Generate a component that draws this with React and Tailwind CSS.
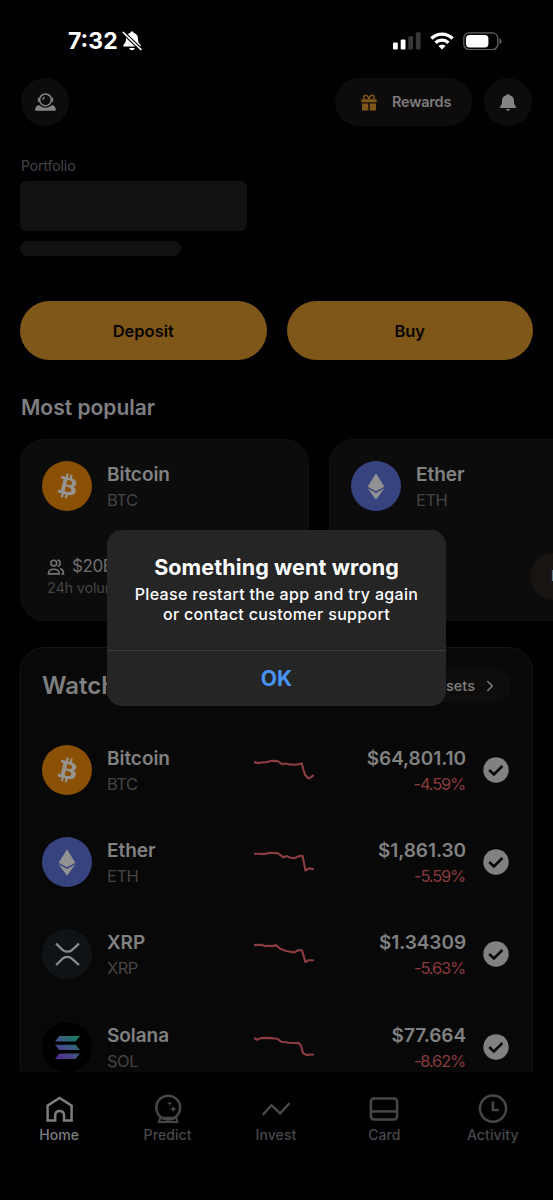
import { ChevronRight } from "lucide-react";

const BtcLogo = () => (
  <svg viewBox="0 0 50 50" className="h-[50px] w-[50px] shrink-0">
    <circle cx="25" cy="25" r="25" fill="#8a5003" />
    <path
      transform="translate(5 4.8) scale(1.26)"
      fill="#969390"
      d="M23.189 14.02c.314-2.096-1.283-3.223-3.465-3.975l.708-2.84-1.728-.43-.69 2.765c-.454-.114-.92-.22-1.385-.326l.695-2.783L15.596 6l-.708 2.839c-.376-.086-.746-.17-1.104-.26l.002-.009-2.384-.595-.46 1.846s1.283.294 1.256.312c.7.175.826.638.805 1.006l-.806 3.235c.048.012.11.03.18.057l-.183-.045-1.13 4.532c-.086.212-.303.531-.793.41.018.025-1.256-.313-1.256-.313l-.858 1.978 2.25.561c.418.105.828.215 1.231.318l-.715 2.872 1.727.43.708-2.84c.472.127.93.245 1.378.357l-.706 2.828 1.728.43.715-2.866c2.948.558 5.164.333 6.097-2.333.752-2.146-.037-3.385-1.588-4.192 1.13-.26 1.98-1.003 2.207-2.538zm-3.95 5.538c-.533 2.147-4.148.986-5.32.695l.95-3.805c1.172.293 4.929.872 4.37 3.11zm.535-5.569c-.487 1.953-3.495.96-4.47.717l.86-3.45c.975.243 4.118.696 3.61 2.733z"
    />
  </svg>
);

const EthLogo = () => (
  <svg viewBox="0 0 50 50" className="h-[50px] w-[50px] shrink-0">
    <circle cx="25" cy="25" r="25" fill="#36437f" />
    <path d="M25 12.2 33.4 25.8 25 30.2 16.6 25.8Z" fill="#929292" />
    <path d="M16.6 27.3 25 31.9 33.4 27.3 25 38.8Z" fill="#929292" />
  </svg>
);

const XrpLogo = () => (
  <svg viewBox="0 0 50 50" className="h-[50px] w-[50px] shrink-0">
    <circle cx="25" cy="25" r="25" fill="#101315" />
    <g fill="none" stroke="#8a8b8c" strokeWidth="2.3">
      <path d="M14.2 14.6 20.4 20.8C23 23.3 27.6 23.3 30.2 20.8L37 14.6" />
      <path d="M14.2 36 20.4 29.8C23 27.3 27.6 27.3 30.2 29.8L37 36" />
    </g>
  </svg>
);

const SolLogo = () => (
  <svg viewBox="0 0 50 50" className="h-[50px] w-[50px] shrink-0">
    <defs>
      <linearGradient id="sol" x1="15" y1="38" x2="36" y2="13" gradientUnits="userSpaceOnUse">
        <stop offset="0" stopColor="#552590" />
        <stop offset="0.5" stopColor="#3f5584" />
        <stop offset="1" stopColor="#108456" />
      </linearGradient>
    </defs>
    <circle cx="25" cy="25" r="25" fill="#000000" />
    <g fill="url(#sol)">
      <path d="M17.2 14H38L33.6 19.4H13Z" />
      <path d="M13 22.7H33.6L38 28.1H17.2Z" />
      <path d="M17.2 31.4H38L33.6 36.9H13Z" />
    </g>
  </svg>
);

const assets = [
  {
    name: "Bitcoin",
    symbol: "BTC",
    price: "$64,801.10",
    change: "-4.59%",
    Logo: BtcLogo,
    points: "1,-24 13,-21 22,-23 38,-24 55,-28 72,-27 86,-18 96,-20 108,-17 122,-16 138,-18 146,-20 151,0 156,15 166,26 172,23 180,17",
  },
  {
    name: "Ether",
    symbol: "ETH",
    price: "$1,861.30",
    change: "-5.59%",
    Logo: EthLogo,
    points: "1,-25 15,-25 30,-24 50,-28 72,-27 82,-20 90,-14 98,-18 112,-13 124,-12 138,-18 148,-19 157,26 168,19 180,22",
  },
  {
    name: "XRP",
    symbol: "XRP",
    price: "$1.34309",
    change: "-5.63%",
    Logo: XrpLogo,
    points: "1,-27 23,-28 33,-24 44,-25 56,-24 67,-27 80,-16 98,-9 123,-5 132,-10 140,-12 147,-10 157,25 166,19 180,19",
  },
  {
    name: "Solana",
    symbol: "SOL",
    price: "$77.664",
    change: "-8.62%",
    Logo: SolLogo,
    points: "1,-27 10,-22 20,-27 38,-28 52,-27 72,-25 83,-16 108,-13 136,-12 142,-6 150,19 160,24 180,23",
  },
];

const StatusBar = () => (
  <div className="flex h-[78px] items-center justify-between pl-[68px] pr-[51px] pt-1">
    <div className="flex items-center gap-1 text-white">
      <span className="text-[23px] font-bold leading-7">7:32</span>
      <svg viewBox="0 0 20 20" className="h-5 w-5" fill="#fff">
        <path d="M10 .6C10.9.6 11.6 1.1 11.8 1.9 14.6 2.6 16 4.8 16 7.6 16 11.3 17 12.3 18.4 13.8 19 14.6 18.7 15.6 17.8 15.6H2.2C1.3 15.6 1 14.6 1.6 13.8 3 12.3 4 11.3 4 7.6 4 4.8 5.4 2.6 8.2 1.9 8.4 1.1 9.1.6 10 .6Z" />
        <path d="M7.2 17H12.8C12.4 18.5 11.3 19.2 10 19.2S7.6 18.5 7.2 17Z" />
        <path d="M1.2 1.4 19 18.6" stroke="#010103" strokeWidth="3.8" />
        <path d="M1.2 1.4 19 18.6" stroke="#fff" strokeWidth="1.5" strokeLinecap="round" />
      </svg>
    </div>

    <div className="flex items-center gap-[9px]">
      <svg viewBox="0 0 28 18" className="h-[18px] w-7">
        <rect x="0" y="10.5" width="4.8" height="7" rx="1.3" fill="#fff" />
        <rect x="7.7" y="7.5" width="4.8" height="10" rx="1.3" fill="#fff" />
        <rect x="15.3" y="4.2" width="4.8" height="13.3" rx="1.3" fill="#38383a" />
        <rect x="22.8" y="0.3" width="4.8" height="17.2" rx="1.3" fill="#38383a" />
      </svg>
      <svg viewBox="0 0 24 18" className="h-[18px] w-6" fill="none" stroke="#fff" strokeWidth="3.3">
        <path d="M1.4 6.5C7.4.7 16.6.7 22.6 6.5" />
        <path d="M5.5 10.8C9.2 7.3 14.8 7.3 18.5 10.8" />
        <path d="M12 17.6 8.4 14.1C10.4 12.2 13.6 12.2 15.6 14.1Z" fill="#fff" stroke="none" />
      </svg>
      <svg viewBox="0 0 39 18" className="h-[18px] w-[39px]">
        <rect x="0.8" y="0.8" width="34" height="16.8" rx="5.4" fill="none" stroke="#626264" strokeWidth="1.3" />
        <rect x="3" y="3" width="22.4" height="12.4" rx="3.6" fill="#fff" />
        <path d="M36.4 6.2C39.2 7 39.2 11.4 36.4 12.2Z" fill="#626264" />
      </svg>
    </div>
  </div>
);

const Header = () => (
  <div className="flex h-12 items-center justify-between pl-[21px] pr-[21px]">
    <button type="button" className="flex h-12 w-12 items-center justify-center rounded-full bg-[#0d0b0b]">
      <svg viewBox="0 0 21 18" className="h-[18px] w-[21px]">
        <path
          d="M.2 17.8C.2 14.2 1.2 12.4 4.3 12.3 6 14 8 14.7 10.5 14.7S15 14 16.7 12.3C19.8 12.4 20.8 14.2 20.8 17.8Z"
          fill="#858385"
        />
        <circle cx="10.5" cy="6.8" r="5.9" fill="none" stroke="#858385" strokeWidth="1.5" />
        <path d="M3.6 4.8V8.8M17.4 4.8V8.8" stroke="#858385" strokeWidth="1.5" />
        <path d="M7.8 6.9C7.8 5.5 8.6 4.6 9.9 4.4" fill="none" stroke="#858385" strokeWidth="1.2" />
      </svg>
    </button>

    <div className="flex gap-3">
      <button type="button" className="flex h-12 w-[137px] items-center rounded-full bg-[#0d0b0b] pl-[26px]">
        <svg viewBox="0 0 16 17" className="h-[17px] w-4" fill="#7f5719">
          <path d="M.3 5.3H15.7V8.2H.3ZM1 9.5H7.3V16.4H1ZM8.7 9.5H15V16.4H8.7Z" />
          <path
            d="M8 5.2C7.3 2.9 6.3 1.3 4.6 1.3 2.4 1.3 2.2 4.2 4 5.2M8 5.2C8.7 2.9 9.7 1.3 11.4 1.3 13.6 1.3 13.8 4.2 12 5.2"
            fill="none"
            stroke="#7f5719"
            strokeWidth="1.6"
          />
        </svg>
        <span className="ml-[15px] text-[14.5px] font-semibold tracking-[-0.2px] text-[#7e7c7d]">Rewards</span>
      </button>
      <button type="button" className="flex h-12 w-12 items-center justify-center rounded-full bg-[#0d0b0b]">
        <svg viewBox="0 0 16 17" className="h-[17px] w-4" fill="#858385">
          <path d="M8 .2C9 .2 9.6.7 9.8 1.2 12.6 1.9 14 4 14 6.6V9.7L15.8 12.3V14H.2V12.3L2 9.7V6.6C2 4 3.4 1.9 6.2 1.2 6.4.7 7 .2 8 .2Z" />
          <path d="M5.8 15H10.2C9.7 16.3 9 16.7 8 16.7S6.3 16.3 5.8 15Z" />
        </svg>
      </button>
    </div>
  </div>
);

const AssetName = ({ name, symbol }) => (
  <div className="ml-[15px]">
    <p className="h-[27px] text-[19px] font-semibold leading-[27px] tracking-[-0.05px] text-[#818181]">{name}</p>
    <p className="h-[26px] text-[16.5px] leading-[25px] tracking-[-0.5px] text-[#454444]">{symbol}</p>
  </div>
);

const PopularCard = ({ asset, volume, action }) => {
  const { Logo } = asset;

  return (
    <div className="h-[182px] w-[289px] shrink-0 rounded-[24px] border border-[#101010] bg-[#0c0c0c] p-[21px]">
      <div className="flex h-[53px] items-start">
        <Logo />
        <AssetName name={asset.name} symbol={asset.symbol} />
      </div>

      <div className="mt-[39px] flex">
        {volume && (
          <div className="pl-[5px] pt-[3px]">
            <p className="flex h-[22px] items-center text-[17px] tracking-[-0.4px] text-[#6f6e6e]">
              <svg viewBox="0 0 18 16" className="mr-[7px] h-4 w-[18px]" fill="none" stroke="#747373" strokeWidth="1.6">
                <circle cx="6.8" cy="4.1" r="2.9" />
                <path d="M1.4 14.9C1.4 11.6 3 10.2 6.8 10.2S12.2 11.6 12.2 14.9Z" />
                <path d="M10.6 1.1C14 1.1 14 7.1 10.6 7.1M13.2 9.6C15.8 10.2 16.5 12 16.5 14.9H14.4" />
              </svg>
              {volume}
            </p>
            <p className="h-[21px] text-[14.5px] leading-[20px] tracking-[-0.2px] text-[#454444]">24h volume</p>
          </div>
        )}
        {action && (
          <button
            type="button"
            className="ml-auto h-[47px] w-[66px] rounded-full bg-[#171412] pl-1 text-[15px] font-semibold text-[#818181]"
          >
            {action}
          </button>
        )}
      </div>
    </div>
  );
};

const WatchRow = ({ asset }) => {
  const { Logo } = asset;

  return (
    <div className="flex h-[92.4px] items-center">
      <Logo />
      <div className="h-[50px] w-[162px]">
        <AssetName name={asset.name} symbol={asset.symbol} />
      </div>
      <svg viewBox="0 -75 183 150" className="mr-px h-[50px] w-[60px] shrink-0">
        <polyline points={asset.points} fill="none" stroke="#8b3d40" strokeWidth="6.5" strokeLinejoin="round" strokeLinecap="round" />
      </svg>
      <div className="h-[50px] flex-1 text-right">
        <p className="h-[27px] text-[19px] font-semibold leading-[27px] tracking-[-0.05px] text-[#818181]">{asset.price}</p>
        <p className="h-[26px] text-[16.5px] leading-[25px] tracking-[-1.2px] text-[#883a3d]">
          <span className="mr-px">{asset.change}</span>
        </p>
      </div>
      <svg viewBox="0 0 26 26" className="ml-[17px] mr-[2px] h-[26px] w-[26px] shrink-0">
        <circle cx="13" cy="13" r="12.7" fill="#818181" />
        <path d="M6.2 13 10.9 17.5 19.4 9" fill="none" stroke="#080808" strokeWidth="2.5" />
      </svg>
    </div>
  );
};

const navItems = [
  {
    label: "Home",
    icon: (
      <path d="M3 12.2 15 4.6 27 12.2V27.2H19.4V22C19.4 19.2 17.5 17.6 15 17.6S10.6 19.2 10.6 22V27.2H3Z" transform="translate(0.6 -0.6)" />
    ),
  },
  {
    label: "Predict",
    icon: (
      <>
        <circle cx="15.2" cy="13.6" r="11.9" />
        <path d="M7.2 23.8H23.2L24.4 28H6Z" strokeWidth="2.2" />
        <path
          d="M16.6 7 17.3 8.8 19.1 9.5 17.3 10.2 16.6 12 15.9 10.2 14.1 9.5 15.9 8.8ZM20.2 11.6 21.1 14.1 23.6 15 21.1 15.9 20.2 18.4 19.3 15.9 16.8 15 19.3 14.1Z"
          fill="#474749"
          stroke="none"
        />
      </>
    ),
  },
  { label: "Invest", icon: <path d="M1.8 20.8 10.4 11.2 19.2 19.4 28.6 9" /> },
  {
    label: "Card",
    icon: (
      <>
        <rect x="1.9" y="4.6" width="26.2" height="20.8" rx="3" />
        <path d="M1.9 17.4H28.1" />
      </>
    ),
  },
  {
    label: "Activity",
    icon: (
      <>
        <circle cx="15" cy="14.6" r="13.1" />
        <path d="M14.9 7.4V16H20.8" />
      </>
    ),
  },
];

const BottomNav = () => (
  <nav className="grid h-32 grid-cols-5 bg-[#010103] pl-[5px] pr-[6px] pt-[22px]">
    {navItems.map((item, index) => (
      <div
        key={item.label}
        className={`flex flex-col items-center ${index === 0 ? "text-[#7d7d7f]" : "text-[#474749]"}`}
      >
        <svg viewBox="0 0 30 30" className="h-[30px] w-[30px]" fill="none" stroke="currentColor" strokeWidth="2.5">
          {item.icon}
        </svg>
        <span className="h-[22px] text-[14px] font-medium leading-[22px] tracking-[0.1px]">{item.label}</span>
      </div>
    ))}
  </nav>
);

const ErrorAlert = () => (
  <div className="absolute left-[107px] top-[530px] flex h-[176px] w-[339px] flex-col rounded-[15px] bg-[#252526] text-center text-white">
    <div className="h-[120px] pt-[25px]">
      <h2 className="text-[21.5px] font-bold leading-[25px] tracking-[0.1px]">Something went wrong</h2>
      <p className="mt-1 text-[16px] font-medium leading-5 tracking-[0.33px]">
        Please restart the app and try again
        <br />
        or contact customer support
      </p>
    </div>
    <button type="button" className="flex-1 border-t border-[#3b3b3c] pt-px text-[21px] font-bold text-[#4793f8]">
      OK
    </button>
  </div>
);

const App = () => {
  return (
    <div className="relative flex h-[1200px] w-[553px] flex-col overflow-hidden bg-[#010103] font-['Inter','Liberation_Sans',sans-serif]">
      <StatusBar />
      <Header />

      <main className="flex-1 overflow-hidden pl-5">
        <p className="mt-[30px] h-[21px] pl-px text-[14px] leading-[20px] tracking-[-0.1px] text-[#454547]">Portfolio</p>
        <div className="mt-1 h-[50px] w-[227px] rounded-[6px] bg-[#121010]" />
        <div className="mt-[10px] h-[15px] w-[161px] rounded-full bg-[#121010]" />

        <div className="mt-[45px] flex gap-5 pr-5">
          <button
            type="button"
            className="h-[59px] flex-1 rounded-full bg-[#7f5719] pt-0.5 text-[16.5px] font-semibold text-[#080401]"
          >
            Deposit
          </button>
          <button
            type="button"
            className="h-[59px] flex-1 rounded-full bg-[#7f5719] pt-0.5 text-[16.5px] font-semibold text-[#080401]"
          >
            Buy
          </button>
        </div>

        <h2 className="mt-[35px] pl-px text-[21px] font-semibold leading-[25px] text-[#7f7f81]">Most popular</h2>
        <div className="mt-[19px] flex gap-5 overflow-hidden">
          <PopularCard asset={assets[0]} volume="$20B" />
          <PopularCard asset={assets[1]} action="Buy" />
        </div>

        <section className="mr-5 mt-[26px] rounded-[24px] border border-[#151515] bg-[#080808] px-[21px] pt-5">
          <div className="flex h-[35px] items-center justify-between">
            <h2 className="text-[24px] font-semibold text-[#7f7f7f]">Watchlist</h2>
            <button
              type="button"
              className="flex h-[35px] items-center gap-[6px] rounded-full bg-[#0f0d0c] pl-5 pr-3 text-[14.5px] font-medium text-[#7f7f7f]"
            >
              All assets
              <ChevronRight size={18} strokeWidth={2} />
            </button>
          </div>

          <div className="mt-[20.5px]">
            {assets.map((asset) => (
              <WatchRow key={asset.symbol} asset={asset} />
            ))}
          </div>
        </section>
      </main>

      <BottomNav />
      <ErrorAlert />
    </div>
  );
};

export default App;
